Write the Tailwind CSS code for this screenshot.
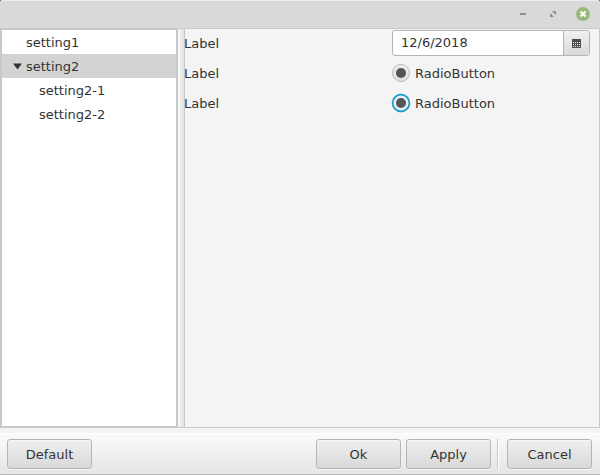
<!DOCTYPE html>
<html lang="en">
<head>
<meta charset="utf-8">
<title>Settings</title>
<script src="https://cdn.jsdelivr.net/npm/@tailwindcss/browser@4"></script>
</head>
<body class="w-[600px] h-[475px] overflow-hidden bg-[#454545] font-['DejaVu_Sans',sans-serif] text-[13px] leading-6 text-[#333]">
<div class="flex h-full flex-col overflow-hidden rounded-t-[3px] bg-[#f4f4f4]">
  <header class="flex h-7 shrink-0 items-start justify-end border-t border-[#efefef] bg-[#d9d9d9] pt-[5px] pr-[10px]">
    <svg width="74" height="16" viewBox="0 0 74 16" class="block">
      <path d="M4 7h6v2H4z" fill="#8e8e8e"/>
      <path d="M36 5h4v4zM34 7v4h4z" fill="#8e8e8e"/>
      <circle cx="67" cy="8" r="7" fill="#9ab87c"/>
      <path d="M64.500 5.500l5 5M69.500 5.500l-5 5" stroke="#fff" stroke-width="2"/>
    </svg>
  </header>
  <main class="flex h-[400px] shrink-0">
    <ul class="w-[178px] border-2 border-[#c8c8c8] bg-white leading-[26px] whitespace-nowrap">
      <li class="h-6 pl-6">setting1</li>
      <li class="flex h-6 items-start bg-[#d3d3d3] pl-[11px]">
        <svg width="9" height="7" viewBox="0 0 9 7" class="mt-[9px] mr-1"><path d="M0 .5h9L4.500 6.500z" fill="#333"/></svg>setting2</li>
      <li class="h-6 pl-[37px]">setting2-1</li>
      <li class="h-6 pl-[37px]">setting2-2</li>
    </ul>
    <div class="w-[6px] border-y border-[#c8c8c8] bg-linear-to-r from-[#fafafa] to-[#dedede]"></div>
    <section class="flex-1 border border-[#c8c8c8] bg-[#f4f4f4]">
      <div class="flex h-[29px] items-start pt-px">
        <span class="-ml-px w-[208px] leading-[28px]">Label</span>
        <div class="flex h-[26px] w-[198px] rounded-[3px] border border-[#b5b5b5] bg-white">
          <span class="flex-1 pl-2 leading-[23px]">12/6/2018</span>
          <span class="flex w-[26px] items-start justify-center rounded-r-[2px] border-l border-[#b5b5b5] bg-linear-to-b from-[#f0f0f0] to-[#dadada] pt-2">
            <svg width="9" height="9" viewBox="0 0 9 9" shape-rendering="crispEdges"><path d="M0 0h9v9H0z" fill="#4d4d4d"/><path d="M1 3.500h7M1 5.500h7M1 7.500h7" stroke="#ececec" stroke-dasharray="1 1"/></svg>
          </span>
        </div>
      </div>
      <div class="flex h-[30px] items-center">
        <span class="-ml-px w-[208px] pt-[2px]">Label</span>
        <svg width="18" height="18" viewBox="0 0 18 18" class="mr-[5px]"><defs><linearGradient id="knob" x2="0" y2="1"><stop stop-color="#f0f0f0"/><stop offset="1" stop-color="#dedede"/></linearGradient></defs><circle cx="9" cy="9" r="8.500" fill="url(#knob)" stroke="#bababa"/><circle cx="9" cy="9" r="5" fill="#555"/></svg>
        <span class="pt-[2px]">RadioButton</span>
      </div>
      <div class="flex h-[30px] items-center">
        <span class="-ml-px w-[208px] pt-[2px]">Label</span>
        <svg width="18" height="18" viewBox="0 0 18 18" class="mr-[5px] overflow-visible"><circle cx="9" cy="9" r="9.600" fill="#c5e4ef"/><circle cx="9" cy="9" r="8.400" fill="#e9eef0" stroke="#139bc8" stroke-width="1.600"/><circle cx="9" cy="9" r="5" fill="#555"/></svg>
        <span class="pt-[2px]">RadioButton</span>
      </div>
    </section>
  </main>
  <footer class="mt-[5px] flex h-[42px] shrink-0 border-t border-b border-t-white border-b-[#b5b5b5] bg-linear-to-b from-[#fafafa] to-[#e5e5e5] pr-2 pl-[7px] pt-[5px]">
    <button class="h-[30px] w-[85px] rounded-[3px] border border-[#b5b5b5] bg-linear-to-b from-[#efefef] to-[#d9d9d9] pt-[2px] shadow-[inset_0_1px_0_#f8f8f8,0_1px_0_#f7f7f7]">Default</button>
    <button class="ml-auto h-[30px] w-[85px] rounded-[3px] border border-[#b5b5b5] bg-linear-to-b from-[#efefef] to-[#d9d9d9] pt-[2px] shadow-[inset_0_1px_0_#f8f8f8,0_1px_0_#f7f7f7]">Ok</button>
    <button class="ml-[5px] h-[30px] w-[85px] rounded-[3px] border border-[#b5b5b5] bg-linear-to-b from-[#efefef] to-[#d9d9d9] pt-[2px] shadow-[inset_0_1px_0_#f8f8f8,0_1px_0_#f7f7f7]">Apply</button>
    <div class="ml-[6px] mr-[8px] h-[30px] w-[2px] border-l border-[#c8c8c8] bg-white"></div>
    <button class="h-[30px] w-[85px] rounded-[3px] border border-[#b5b5b5] bg-linear-to-b from-[#efefef] to-[#d9d9d9] pt-[2px] shadow-[inset_0_1px_0_#f8f8f8,0_1px_0_#f7f7f7]">Cancel</button>
  </footer>
</div>
</body>
</html>
